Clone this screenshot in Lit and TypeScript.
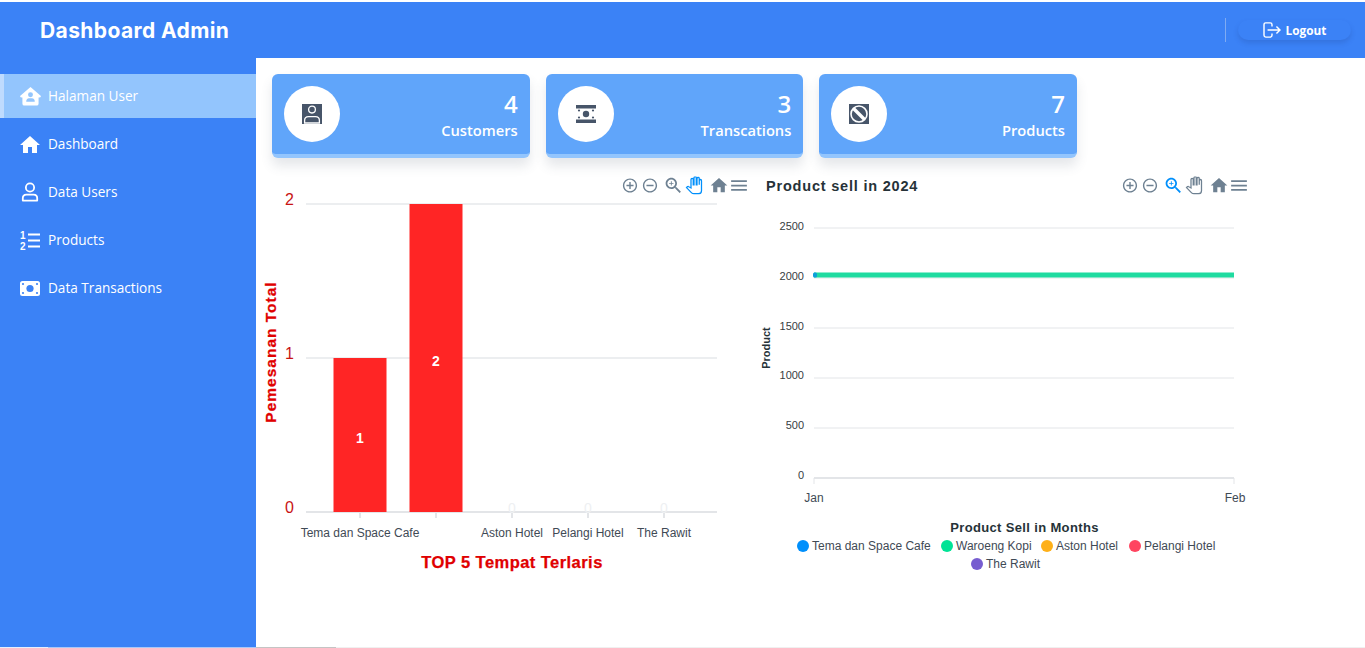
import {css, html, svg, LitElement} from 'lit';
import {customElement} from 'lit/decorators.js';

const HOME_PATH = 'M10 20v-6h4v6h5v-8h3L12 3 2 12h3v8z';

const toolPaths = {
    plus: 'M13 7h-2v4H7v2h4v4h2v-4h4v-2h-4V7zm-1-5C6.48 2 2 6.48 2 12s4.48 10 10 10 10-4.48 10-10S17.52 2 12 2zm0 18c-4.41 0-8-3.59-8-8s3.59-8 8-8 8 3.59 8 8-3.59 8-8 8z',
    minus: 'M7 11v2h10v-2H7zm5-9C6.48 2 2 6.48 2 12s4.48 10 10 10 10-4.48 10-10S17.52 2 12 2zm0 18c-4.41 0-8-3.59-8-8s3.59-8 8-8 8 3.59 8 8-3.59 8-8 8z',
    zoom: 'M15.5 14h-.79l-.28-.27C15.41 12.59 16 11.11 16 9.5 16 5.91 13.09 3 9.5 3S3 5.91 3 9.5 5.91 16 9.5 16c1.61 0 3.09-.59 4.23-1.57l.27.28v.79l5 4.99L20.49 19l-4.99-5zm-6 0C7.01 14 5 11.99 5 9.5S7.01 5 9.5 5 14 7.01 14 9.5 11.99 14 9.5 14zM12 10h-2v2H9v-2H7V9h2V7h1v2h2v1z',
    hand: 'M22 5.5V19c0 2.2-1.8 4-4 4h-6.3c-1.08 0-2.1-.43-2.85-1.19L2 14.83s1.26-1.23 1.3-1.25c.22-.19.49-.29.79-.29.22 0 .42.06.6.16.04.01 3.31 1.9 3.31 1.9V4c0-.83.67-1.5 1.5-1.5S11 3.17 11 4v7h1V1.5c0-.83.67-1.5 1.5-1.5S15 .67 15 1.5V11h1V2.5c0-.83.67-1.5 1.5-1.5s1.5.67 1.5 1.5V11h0V5.5c0-.83.67-1.5 1.5-1.5S22 4.67 22 5.5z',
    home: HOME_PATH,
    menu: 'M3 18h18v-2H3v2zm0-5h18v-2H3v2zm0-7v2h18V6H3z',
};

type ToolName = keyof typeof toolPaths;

const toolbar = (items: [ToolName, number, number][], active: ToolName) =>
    items.map(([name, cx, size]) => svg`
        <svg x=${cx - size / 2} y=${185.5 - size / 2} width=${size} height=${size} viewBox="0 0 24 24">
            <path d=${toolPaths[name]}
                class=${name === 'hand'
                    ? (name === active ? 'tool-line active-line' : 'tool-line')
                    : (name === active ? 'tool active' : 'tool')}></path>
        </svg>
    `);

const sideIcons = {
    houseUser: html`<svg viewBox="0 0 22 20" width="21" height="19">
        <path fill="#fff" d="M11 0 L22 9.4 Q22 11 20 11 L19.5 11 V17.5 Q19.5 19.5 17.5 19.5 H4.5 Q2.5 19.5 2.5 17.5 V11 H2 Q0 11 0 9.4 Z"></path>
        <circle cx="11" cy="8.2" r="2.6" fill="#93c5fd"></circle>
        <path fill="#93c5fd" d="M6.5 15.5 Q6.5 11.8 9.5 11.8 H12.5 Q15.5 11.8 15.5 15.5 Z"></path>
    </svg>`,
    home: html`<svg viewBox="2 3 20 17" width="20" height="17">
        <path fill="#fff" d=${HOME_PATH}></path>
    </svg>`,
    user: html`<svg viewBox="0 0 20 22" width="18" height="20" fill="none" stroke="#fff" stroke-width="2">
        <circle cx="10" cy="6" r="4.6"></circle>
        <path d="M2 20.5 V18 Q2 14 6 14 H14 Q18 14 18 18 V20.5 Z" stroke-linejoin="round"></path>
    </svg>`,
    list: html`<svg viewBox="0 0 20 19" width="20" height="19">
        <text x="0" y="8" class="list-num">1</text>
        <text x="0" y="18.5" class="list-num">2</text>
        <path stroke="#fff" stroke-width="2.2" d="M8 3.5 H20 M8 9.5 H20 M8 15.5 H20"></path>
    </svg>`,
    money: html`<svg viewBox="0 0 20 15" width="20" height="15">
        <rect width="20" height="15" rx="2.5" fill="#fff"></rect>
        <circle cx="10" cy="7.5" r="3.6" fill="#3b82f6"></circle>
        <circle cx="3" cy="3" r="1.1" fill="#3b82f6"></circle>
        <circle cx="17" cy="3" r="1.1" fill="#3b82f6"></circle>
        <circle cx="3" cy="12" r="1.1" fill="#3b82f6"></circle>
        <circle cx="17" cy="12" r="1.1" fill="#3b82f6"></circle>
    </svg>`,
};

const cardIcons = {
    person: html`<svg viewBox="0 0 20 20" width="20" height="20">
        <rect width="20" height="20" fill="#475569"></rect>
        <g fill="none" stroke="#fff" stroke-width="1.3">
            <circle cx="10" cy="5.6" r="3.4"></circle>
            <path d="M2.6 19 V16.5 Q2.6 12.6 6.5 12.6 H13.5 Q17.4 12.6 17.4 16.5 V19 Z"></path>
        </g>
    </svg>`,
    cash: html`<svg viewBox="0 0 20 20" width="20" height="20">
        <rect y="1" width="20" height="18" fill="#475569"></rect>
        <rect x="0" y="4.5" width="20" height="11" fill="#fff"></rect>
        <circle cx="10" cy="10" r="3.2" fill="#475569"></circle>
        <g fill="#475569">
            <circle cx="3" cy="6.5" r="1.1"></circle>
            <circle cx="17" cy="6.5" r="1.1"></circle>
            <circle cx="3" cy="13.5" r="1.1"></circle>
            <circle cx="17" cy="13.5" r="1.1"></circle>
        </g>
    </svg>`,
    ban: html`<svg viewBox="0 0 20 20" width="20" height="20">
        <rect width="20" height="20" fill="#475569"></rect>
        <circle cx="10" cy="10" r="8" fill="none" stroke="#fff" stroke-width="1.6"></circle>
        <path d="M4.5 4.5 L15.5 15.5" stroke="#fff" stroke-width="3.4"></path>
    </svg>`,
};

const menuItems = [
    {label: 'Halaman User', icon: sideIcons.houseUser, active: true},
    {label: 'Dashboard', icon: sideIcons.home},
    {label: 'Data Users', icon: sideIcons.user},
    {label: 'Products', icon: sideIcons.list},
    {label: 'Data Transactions', icon: sideIcons.money},
];

const cards = [
    {value: 4, label: 'Customers', icon: cardIcons.person},
    {value: 3, label: 'Transcations', icon: cardIcons.cash},
    {value: 7, label: 'Products', icon: cardIcons.ban},
];

const barLabels = [
    {x: 360, text: 'Tema dan Space Cafe'},
    {x: 436, text: ''},
    {x: 512, text: 'Aston Hotel'},
    {x: 588, text: 'Pelangi Hotel'},
    {x: 664, text: 'The Rawit'},
];

const legend = [
    {cx: 803, cy: 546, color: '#008ffb', text: 'Tema dan Space Cafe'},
    {cx: 947, cy: 546, color: '#00e396', text: 'Waroeng Kopi'},
    {cx: 1047, cy: 546, color: '#feb019', text: 'Aston Hotel'},
    {cx: 1135, cy: 546, color: '#ff4560', text: 'Pelangi Hotel'},
    {cx: 977, cy: 564, color: '#775dd0', text: 'The Rawit'},
];

@customElement('app-root')
export class AppRoot extends LitElement {

    static styles = css`
        :host {
            display: block;
            height: 648px;
            overflow: hidden;
            background: #fff;
            font-family: "Open Sans", "Noto Sans", sans-serif;
        }

        .page {
            display: flex;
            flex-direction: column;
            height: 648px;
            padding-top: 2px;
            box-sizing: border-box;
        }

        header {
            flex: 0 0 56px;
            background: #3b82f6;
            display: flex;
            align-items: center;
            color: #fff;
        }

        .brand {
            margin-left: 40px;
            font-family: Inter, sans-serif;
            font-weight: 700;
            font-size: 21px;
            letter-spacing: 0.4px;
            flex: 1;
        }

        .divider {
            width: 1px;
            height: 24px;
            background: #7fabf3;
            margin-right: 12px;
        }

        .logout {
            width: 113px;
            height: 20px;
            margin-right: 14px;
            border-radius: 10px;
            box-shadow: 0 3px 5px rgba(30, 64, 140, 0.22);
            display: flex;
            align-items: center;
            justify-content: center;
            gap: 5px;
            font-size: 11.8px;
            font-weight: 700;
        }

        .body {
            flex: 1;
            display: flex;
            min-height: 0;
        }

        aside {
            flex: 0 0 256px;
            background: #3b82f6;
            padding-top: 16px;
            box-sizing: border-box;
        }

        .item {
            height: 44px;
            margin-bottom: 4px;
            display: flex;
            align-items: center;
            color: #fff;
            font-size: 13.6px;
            border-left: 4px solid transparent;
        }

        .label {
            position: relative;
            top: -1px;
        }

        .item.active {
            background: #93c5fd;
            border-left-color: #bfdbfe;
        }

        .item-icon {
            width: 24px;
            display: flex;
            justify-content: center;
            margin: 0 6px 0 14px;
        }

        .list-num {
            font: 700 10px "Liberation Sans", sans-serif;
            fill: #fff;
        }

        main {
            flex: 1;
            padding: 16px 0 0 4px;
            min-width: 0;
        }

        .cards {
            display: flex;
            gap: 16px;
            margin-left: 12px;
            width: 805px;
        }

        .card {
            flex: 1;
            height: 84px;
            box-sizing: border-box;
            background: #60a5fa;
            border-bottom: 4px solid #93c5fd;
            border-radius: 6px;
            padding: 12px;
            display: flex;
            justify-content: space-between;
            color: #fff;
            box-shadow: 0 8px 12px rgba(71, 85, 105, 0.14);
        }

        .circle {
            width: 56px;
            height: 56px;
            border-radius: 50%;
            background: #fff;
            display: flex;
            align-items: center;
            justify-content: center;
        }

        .figures {
            text-align: right;
            font-weight: 600;
        }

        .value {
            font-size: 24px;
            line-height: 36px;
        }

        .name {
            font-size: 14.7px;
            line-height: 24px;
            margin-top: -4px;
        }

        .charts {
            display: flex;
            margin-top: 12px;
        }

        .charts svg {
            display: block;
        }

        .chart-left {
            margin-right: 6px;
        }

        text {
            font-family: "Liberation Sans", Arial, sans-serif;
        }

        .grid {
            stroke: #eceef0;
            stroke-width: 2;
        }

        .grid-thin {
            stroke: #e3e5e8;
            stroke-width: 1;
        }

        .axis {
            stroke: #e3e5e8;
            stroke-width: 2;
        }

        .tool {
            fill: #6e8192;
        }

        .tool.active {
            fill: #008ffb;
        }

        .tool-line {
            fill: none;
            stroke: #6e8192;
            stroke-width: 1.7;
        }

        .tool-line.active-line {
            stroke: #008ffb;
        }

        .y-red {
            font-size: 16px;
            fill: #c81414;
            text-anchor: end;
        }

        .bar {
            fill: #ff2525;
        }

        .bar-value {
            font-size: 14px;
            font-weight: 700;
            fill: #fff;
            text-anchor: middle;
        }

        .ghost {
            font-size: 14px;
            fill: #eef0f2;
            text-anchor: middle;
        }

        .cat {
            font-size: 12px;
            fill: #3f4a55;
            text-anchor: middle;
        }

        .red-title {
            font-weight: 700;
            fill: #e00000;
            stroke: #e00000;
            stroke-width: 0.25;
            text-anchor: middle;
        }

        .red-title.main-title {
            font-size: 16.5px;
            letter-spacing: 0.45px;
        }

        .red-title.side-title {
            font-size: 15.5px;
            letter-spacing: 1px;
        }

        .title {
            font-size: 14.5px;
            font-weight: 700;
            fill: #263238;
            letter-spacing: 0.8px;
        }

        .y-num {
            font-size: 11px;
            fill: #373d3f;
            text-anchor: end;
        }

        .axis-title {
            font-weight: 700;
            fill: #263238;
            text-anchor: middle;
        }

        .axis-title.small {
            font-size: 11px;
        }

        .axis-title.wide {
            font-size: 13px;
            letter-spacing: 0.35px;
        }

        .legend-text {
            font-size: 12px;
            fill: #3f4a55;
        }

        .strip {
            flex: 0 0 1px;
            display: flex;
        }

        .strip span:nth-child(1) {
            width: 48px;
            background: #e6effd;
        }

        .strip span:nth-child(2) {
            width: 208px;
            background: #a9c8f8;
        }

        .strip span:nth-child(3) {
            width: 80px;
            background: #c4c4c4;
        }

        .strip span:nth-child(4) {
            flex: 1;
            background: #f0f0f0;
        }
    `;

    private _renderLeftChart() {
        return html`
            <svg class="chart-left" width="490" height="410" viewBox="260 170 490 410">
                ${toolbar([['plus', 630, 17], ['minus', 650, 17], ['zoom', 673.5, 21], ['hand', 694, 18], ['home', 719, 20], ['menu', 739, 21]], 'hand')}
                ${[204, 358].map((y) => svg`<line class="grid" x1="306" x2="717" y1=${y} y2=${y}></line>`)}
                <line class="axis" x1="306" x2="717" y1="512" y2="512"></line>
                ${barLabels.map((b) => svg`<line class="axis" x1=${b.x} x2=${b.x} y1="512" y2="518"></line>`)}
                <text class="y-red" x="294" y="205">2</text>
                <text class="y-red" x="294" y="359">1</text>
                <text class="y-red" x="294" y="513">0</text>
                <rect class="bar" x="333.5" y="358" width="53" height="154"></rect>
                <rect class="bar" x="409.5" y="204" width="53" height="308"></rect>
                <text class="bar-value" x="360" y="443">1</text>
                <text class="bar-value" x="436" y="366">2</text>
                ${[512, 588, 664].map((x) => svg`<text class="ghost" x=${x} y="513">0</text>`)}
                ${barLabels.map((b) => svg`<text class="cat" x=${b.x} y="537">${b.text}</text>`)}
                <text class="red-title main-title" x="512" y="568">TOP 5 Tempat Terlaris</text>
                <text class="red-title side-title" transform="translate(276 352) rotate(-90)">Pemesanan Total</text>
            </svg>
        `;
    }

    private _renderRightChart() {
        return html`
            <svg width="504" height="410" viewBox="756 170 504 410">
                <text class="title" x="766" y="190.5">Product sell in 2024</text>
                ${toolbar([['plus', 1130, 17], ['minus', 1150, 17], ['zoom', 1173.5, 21], ['hand', 1194, 18], ['home', 1219, 20], ['menu', 1239, 21]], 'zoom')}
                ${[228, 278, 328, 378, 428].map((y) => svg`<line class="grid-thin" x1="814" x2="1234" y1=${y} y2=${y}></line>`)}
                <line class="axis" x1="814" x2="1234" y1="478" y2="478"></line>
                <line class="grid-thin" x1="814" x2="814" y1="478" y2="484"></line>
                <line class="grid-thin" x1="1234" x2="1234" y1="478" y2="484"></line>
                ${[2500, 2000, 1500, 1000, 500, 0].map((v, i) => svg`<text class="y-num" x="804" y=${230 + i * 49.8}>${v}</text>`)}
                <line x1="814" x2="1234" y1="275" y2="275" stroke="#1fdba0" stroke-width="5"></line>
                <rect x="813" y="272.5" width="4" height="5" rx="1.5" fill="#0d9fd8"></rect>
                <text class="cat" x="814" y="502">Jan</text>
                <text class="cat" x="1235" y="502">Feb</text>
                <text class="axis-title small" transform="translate(770 348) rotate(-90)">Product</text>
                <text class="axis-title wide" x="1024.5" y="532">Product Sell in Months</text>
                ${legend.map((l) => svg`
                    <circle cx=${l.cx} cy=${l.cy} r="6" fill=${l.color}></circle>
                    <text class="legend-text" x=${l.cx + 9} y=${l.cy + 4}>${l.text}</text>
                `)}
            </svg>
        `;
    }

    render() {
        return html`
            <div class="page">
                <header>
                    <div class="brand">Dashboard Admin</div>
                    <div class="divider"></div>
                    <div class="logout">
                        <svg viewBox="0 0 20 18" width="18" height="16" fill="none" stroke="#fff" stroke-width="1.6">
                            <path d="M10 5 V3 Q10 1 8 1 H3 Q1 1 1 3 V15 Q1 17 3 17 H8 Q10 17 10 15 V13"></path>
                            <path d="M5 9 H19 M15 5 L19 9 L15 13"></path>
                        </svg>
                        Logout
                    </div>
                </header>
                <div class="body">
                    <aside>
                        ${menuItems.map((m) => html`
                            <div class="item ${m.active ? 'active' : ''}">
                                <span class="item-icon">${m.icon}</span>
                                <span class="label">${m.label}</span>
                            </div>
                        `)}
                    </aside>
                    <main>
                        <div class="cards">
                            ${cards.map((c) => html`
                                <div class="card">
                                    <div class="circle">${c.icon}</div>
                                    <div class="figures">
                                        <div class="value">${c.value}</div>
                                        <div class="name">${c.label}</div>
                                    </div>
                                </div>
                            `)}
                        </div>
                        <div class="charts">
                            ${this._renderLeftChart()}
                            ${this._renderRightChart()}
                        </div>
                    </main>
                </div>
                <div class="strip"><span></span><span></span><span></span><span></span></div>
            </div>
        `;
    }
}
